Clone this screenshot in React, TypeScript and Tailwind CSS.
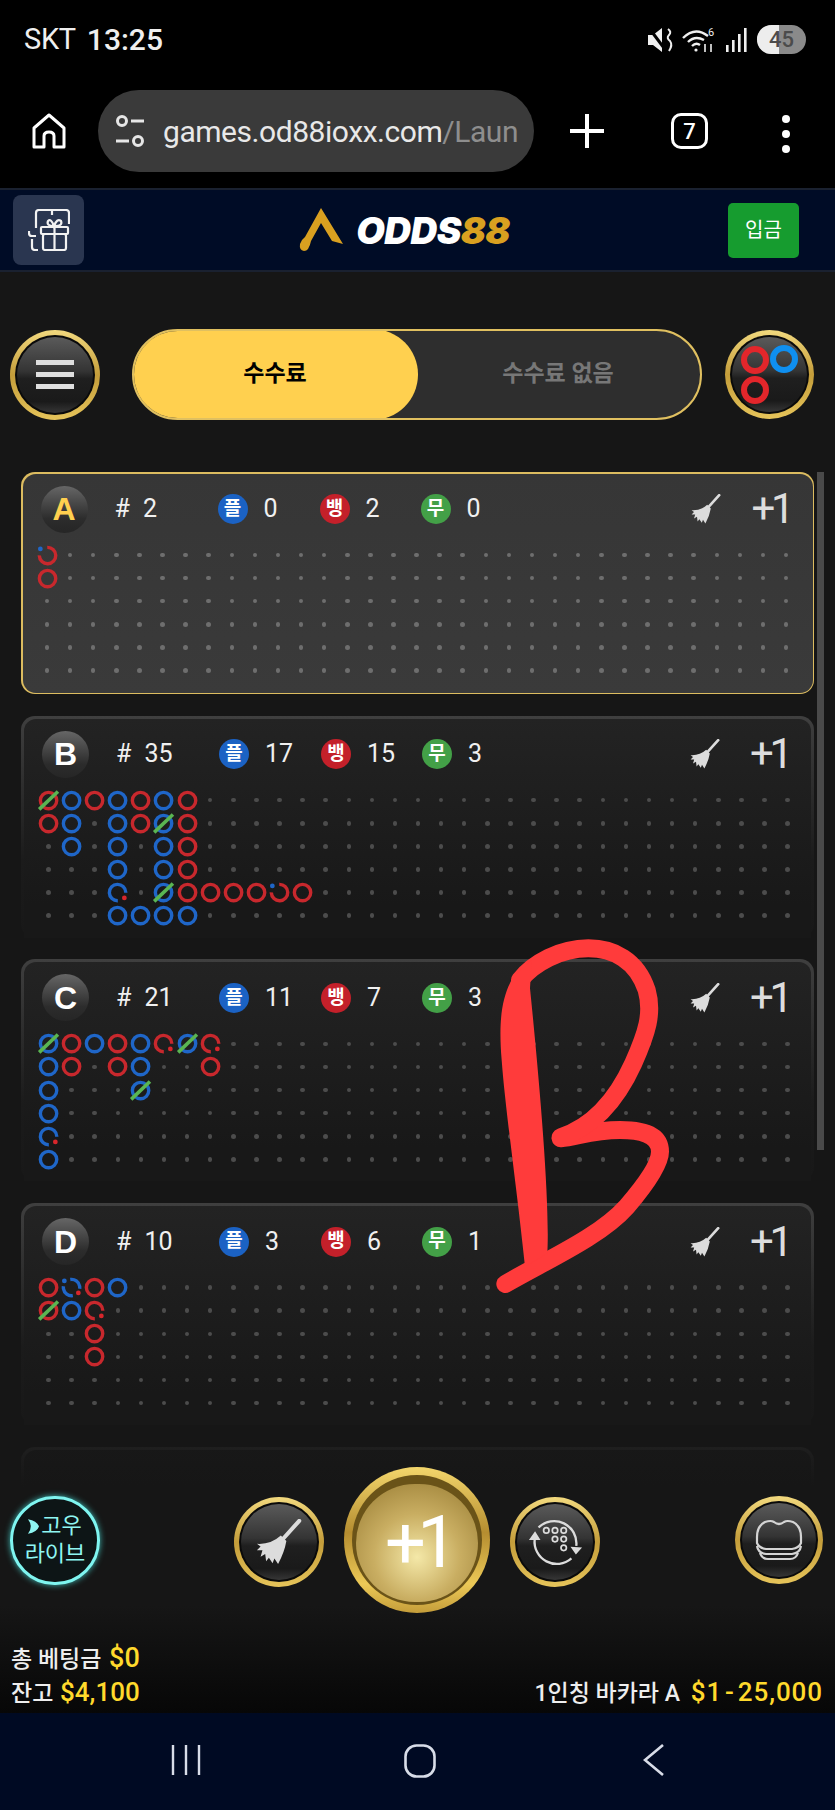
import React from "react";

const SANS = "font-[Roboto,'Noto_Sans_CJK_KR',sans-serif]";

// Each row lists columns separated by spaces: r/b is the ring colour, "." an empty spot.
// Suffixes: t = tie slash, p = blue pair dot, q = red pair dot.
const ROADS: Record<string, string[]> = {
  A: ["rp", "r"],
  B: [
    "rt b r b r b r",
    "r b . b r bt r",
    ". b . b . b r",
    ". . . b . b r",
    ". . . bq . bt r r r r rp r",
    ". . . b b b b",
  ],
  C: [
    "bt r b r b rq bt rq",
    "b r . r b . . r",
    "b . . . bt",
    "b",
    "bq",
    "b",
  ],
  D: ["r bpq r b", "rt b rq", ". . r", ". . r"],
};

const CARDS = [
  { id: "A", total: 2, p: 0, b: 2, t: 0 },
  { id: "B", total: 35, p: 17, b: 15, t: 3 },
  { id: "C", total: 21, p: 11, b: 7, t: 3 },
  { id: "D", total: 10, p: 3, b: 6, t: 1 },
];

function Ring({ token }: { token: string }) {
  const color = token[0] === "r" ? "#c8282d" : "#1f66c8";
  const tie = token.includes("t");
  const blue = token.includes("p");
  const red = token.includes("q");
  let dash: string | undefined;
  let rot = 0;
  if (blue && red) {
    dash = "30 20";
    rot = 81;
  } else if (blue) {
    dash = "76 24";
    rot = 268;
  } else if (red) {
    dash = "76 24";
    rot = 88;
  }
  return (
    <svg viewBox="-11.55 -11.55 23.1 23.1" className="block h-[23.1px] w-[23.1px] overflow-visible">
      <circle r="8.2" fill="none" stroke={color} strokeWidth="3.4" pathLength={100} strokeDasharray={dash} transform={`rotate(${rot})`} />
      {blue && <circle cx="-7.2" cy="-6.6" r="2.4" fill="#1f66c8" />}
      {red && <circle cx="6.8" cy="5.4" r="2.4" fill="#d8262b" />}
      {tie && <line x1="-9.4" y1="8.8" x2="9.4" y2="-9" stroke="#5ab552" strokeWidth="3.6" />}
    </svg>
  );
}

function Road({ id, active }: { id: string; active: boolean }) {
  const rows = ROADS[id];
  const cells: React.ReactNode[] = [];
  for (let r = 0; r < 6; r++) {
    const tokens = (rows[r] ?? "").split(" ");
    for (let c = 0; c < 33; c++) {
      const tok = tokens[c];
      cells.push(
        <div key={`${r}-${c}`} className="flex h-[23.1px] w-[23.1px] items-center justify-center">
          {tok && tok !== "." ? (
            <Ring token={tok} />
          ) : (
            <div className={active ? "h-[4.5px] w-[4.5px] rounded-full bg-[#6e6e6e]" : "h-[4.5px] w-[4.5px] rounded-full bg-[#4c4c4c]"} />
          )}
        </div>
      );
    }
  }
  return <div className="ml-[13px] mt-[1px] grid grid-cols-[repeat(33,23.1px)]">{cells}</div>;
}

function Broom({ className }: { className: string }) {
  return (
    <svg viewBox="0 0 50 50" className={className} fill="#dcdcdc">
      <path d="M47 2 L29 22" stroke="#dcdcdc" strokeWidth="4.4" strokeLinecap="round" />
      <path d="M27 18 L33 24 Q31 36 24 49 L20 43 L18 48 L14 42 L11 46 L10 38 L5 41 L7 34 L1 34 L5 30 L1 27 Q16 28 27 18 Z" />
    </svg>
  );
}

function Badge({ label, className }: { label: string; className: string }) {
  return (
    <span className={`flex h-[30px] w-[30px] items-center justify-center rounded-full text-[19px] font-bold text-white ${className}`}>
      {label}
    </span>
  );
}

function Card({ id, total, p, b, t }: (typeof CARDS)[number]) {
  const active = id === "A";
  const letter =
    "flex h-[47px] w-[47px] items-center justify-center rounded-full bg-[linear-gradient(to_bottom,#666666,#2c2c2c_70%,#262626)] text-[32px] font-bold font-['Liberation_Sans',sans-serif]";
  return (
    <div
      className={
        active
          ? "h-[222px] shrink-0 rounded-[14px] bg-[#dcbc60] p-[1.5px]"
          : "h-[222px] shrink-0 rounded-[14px] bg-[linear-gradient(to_bottom,#3f3f3f,#1b1b1b_65%,#181818)] px-[3px] pt-[3px]"
      }
    >
      <div
        className={
          active
            ? "h-full rounded-[13px] bg-[linear-gradient(to_bottom,#363636,#3a3a3a)]"
            : "h-full rounded-t-[12px] bg-[linear-gradient(to_bottom,#232323,#181818_85%)]"
        }
      >
        <div className={`flex h-[69px] items-center pl-[18px] pt-[2px] text-[25px] text-[#f0f0f0] ${SANS}`}>
          <div className={active ? `${letter} text-[#ffd04f]` : `${letter} text-white`}>{id}</div>
          <div className="ml-[27px] w-[103px]">
            #<span className="ml-[13px]">{total}</span>
          </div>
          <Badge label="플" className="bg-[#1b62c4]" />
          <div className="ml-[16px] w-[56px]">{p}</div>
          <Badge label="뱅" className="bg-[#c4202a]" />
          <div className="ml-[16px] w-[55px]">{b}</div>
          <Badge label="무" className="bg-[#43a047]" />
          <div className="ml-[16px]">{t}</div>
          <Broom className="ml-auto h-[30px] w-[30px]" />
          <div className="ml-[30px] mr-[22px] text-[42px] leading-none tracking-[-0.1em] text-[#dddddd]">+1</div>
        </div>
        <Road id={id} active={active} />
      </div>
    </div>
  );
}

function GoldButton({ className, children }: { className: string; children: React.ReactNode }) {
  return (
    <div className={`shrink-0 rounded-full bg-[linear-gradient(to_bottom,#f2d97e,#c49d3a_50%,#e6c45a)] p-[5px] ${className}`}>
      <div className="h-full w-full rounded-full bg-[#0a0a0a] p-[2px]">
        <div className="flex h-full w-full items-center justify-center rounded-full bg-[linear-gradient(to_bottom,#5a5a5a,#343434_45%,#1f1f1f_55%,#1a1a1a_85%,#363636)]">
          {children}
        </div>
      </div>
    </div>
  );
}

function StatusBar() {
  return (
    <div className="flex h-[78px] items-center pl-[24px] pr-[29px] pt-[1px] text-[#efefef]">
      <span className="text-[29px] leading-none tracking-[-0.01em]">SKT</span>
      <span className="ml-[11px] text-[30px] font-medium leading-none">13:25</span>
      <svg viewBox="0 0 28 26" className="ml-auto h-[26px] w-[28px]" fill="#efefef">
        <path d="M1 8 H6 L15 1 V25 L6 18 H1 Z" />
        <path d="M2 1 L20 25" stroke="#000000" strokeWidth="3" />
        <path d="M21 2 Q25 5 22 8 Q19 11 23 14 Q26 18 22 24" fill="none" stroke="#efefef" strokeWidth="2" />
      </svg>
      <svg viewBox="0 0 36 28" className="ml-[6px] h-[28px] w-[36px]" fill="none" stroke="#efefef" strokeWidth="2.4">
        <path d="M2 12 Q14 0 27 10" />
        <path d="M7 16 Q14 9 23 14" />
        <path d="M11 20 Q15 16 19 19" />
        <circle cx="15" cy="24" r="1.6" fill="#efefef" stroke="none" />
        <path d="M24 18 V26 M30 18 V26" strokeWidth="1.6" />
        <text x="27" y="10" fontSize="11" fill="#efefef" stroke="none" fontFamily="Roboto">6</text>
      </svg>
      <svg viewBox="0 0 24 26" className="ml-[8px] h-[26px] w-[24px]" fill="#efefef">
        <rect x="1" y="18" width="2.6" height="7" />
        <rect x="7" y="13" width="2.6" height="12" />
        <rect x="13" y="7" width="2.6" height="18" />
        <rect x="19" y="1" width="2.6" height="24" />
      </svg>
      <div className="relative ml-[8px] flex h-[29px] w-[49px] items-center justify-center overflow-hidden rounded-full bg-[#8a8a8a]">
        <div className="absolute inset-y-0 left-0 w-[22px] bg-[#ededed]" />
        <span className="relative text-[22px] font-medium text-[#4b4b4b]">45</span>
      </div>
    </div>
  );
}

function BrowserBar() {
  return (
    <div className="flex h-[110px] items-start pl-[32px] pt-[12px]">
      <svg viewBox="0 0 34 36" className="mt-[23px] h-[36px] w-[34px]" fill="none" stroke="#ffffff" strokeWidth="3">
        <path d="M2 34 V15 L17 2 L32 15 V34 H22 V23 Q22 19 17 19 Q12 19 12 23 V34 Z" strokeLinejoin="round" />
      </svg>
      <div className="ml-[32px] flex h-[82px] w-[436px] items-center overflow-hidden rounded-full bg-[#3a3a3a] pl-[17px]">
        <svg viewBox="0 0 30 34" className="h-[34px] w-[30px] shrink-0" fill="none" stroke="#e6e6e6" strokeWidth="3">
          <circle cx="7" cy="7" r="4.5" />
          <path d="M16 7 H29 M1 27 H14" />
          <circle cx="23" cy="27" r="4.5" />
        </svg>
        <span className="ml-[18px] whitespace-nowrap text-[30px] tracking-[-0.015em] text-[#e8e8e8]">
          games.od88ioxx.com<span className="text-[#8e8e8e]">/Laun</span>
        </span>
      </div>
      <svg viewBox="0 0 34 34" className="ml-[36px] mt-[24px] h-[34px] w-[34px]" stroke="#ffffff" strokeWidth="4">
        <path d="M17 0 V34 M0 17 H34" />
      </svg>
      <div className="ml-[67px] mt-[23px] flex h-[36px] w-[37px] items-center justify-center rounded-[10px] border-[3px] border-white text-[22px] font-medium text-white">
        7
      </div>
      <div className="ml-[74px] mt-[25px] flex flex-col gap-[7px]">
        <div className="h-[8px] w-[8px] rounded-full bg-white" />
        <div className="h-[8px] w-[8px] rounded-full bg-white" />
        <div className="h-[8px] w-[8px] rounded-full bg-white" />
      </div>
    </div>
  );
}

function SiteHeader() {
  return (
    <div className="relative flex h-[84px] shrink-0 items-center justify-between border-y-[2px] border-[#1a2130] bg-[#000c26] pl-[13px] pr-[36px]">
      <div className="flex h-[70px] w-[71px] items-center justify-center rounded-[8px] bg-[#2a3650]">
        <svg viewBox="0 0 42 42" className="h-[42px] w-[42px]" fill="none" stroke="#f2f2f2" strokeWidth="2.2">
          <path d="M8 19 V4 Q8 1 11 1 H38 Q41 1 41 4 V15" />
          <path d="M24 1 V6" />
          <path d="M8 27 H4 Q1 27 1 24 V22 M4 30 V38 Q4 41 7 41 H10" />
          <rect x="13" y="18" width="27" height="7" rx="1" />
          <rect x="15" y="25" width="23" height="16" rx="2" />
          <path d="M26.5 18 V41" />
          <path d="M26 17 Q18 17 20 12 Q23 9 26 17 Q29 9 33 12 Q35 17 27 17" />
        </svg>
      </div>
      <div className="-ml-[3px] flex items-center">
        <svg viewBox="0 0 44 44" className="h-[44px] w-[44px]">
          <path d="M22 0 L44 36 L33 33 L22 15 L12 33 Q10 43 5 43 Q0 42 1 36 Q3 31 6 29 Z" fill="#d9a020" />
        </svg>
        <span className="ml-[13px] font-['Inter',sans-serif] text-[37px] font-black italic leading-none tracking-[-0.015em] text-white">
          ODDS<span className="text-[#d9a020]">88</span>
        </span>
      </div>
      <div className="flex h-[55px] w-[71px] items-center justify-center rounded-[5px] bg-[#169c2f] text-[20px] text-white">
        입금
      </div>
    </div>
  );
}

function ToolBar() {
  return (
    <div className="mt-[57px] flex h-[91px] items-center pl-[10px]">
      <GoldButton className="h-[90px] w-[90px]">
        <div className="flex flex-col gap-[7px]">
          <div className="h-[5px] w-[38px] bg-[#dedede]" />
          <div className="h-[5px] w-[38px] bg-[#dedede]" />
          <div className="h-[5px] w-[38px] bg-[#dedede]" />
        </div>
      </GoldButton>
      <div className="ml-[32px] flex h-[91px] w-[570px] overflow-hidden rounded-full border-[2px] border-[#e0c060] bg-[#2e2e2e] text-[23px] font-bold">
        <div className="-m-[2px] flex h-[91px] w-[286px] items-center justify-center rounded-full bg-[#ffd04f] text-black">수수료</div>
        <div className="flex flex-1 items-center justify-center text-[#777777]">수수료 없음</div>
      </div>
      <GoldButton className="ml-[23px] h-[89px] w-[89px]">
        <svg viewBox="0 0 60 60" className="h-[60px] w-[60px]" fill="none" strokeWidth="6">
          <circle cx="15" cy="15" r="11" stroke="#e3262b" />
          <circle cx="44" cy="14" r="11" stroke="#0f8ff0" />
          <circle cx="15" cy="45" r="11" stroke="#e3262b" />
        </svg>
      </GoldButton>
    </div>
  );
}

function ReloadIcon() {
  return (
    <svg viewBox="0 0 60 60" className="h-[58px] w-[58px]" fill="none" stroke="#dcdcdc" strokeWidth="2.4">
      <path d="M13 15 A23 23 0 0 1 52 34" />
      <path d="M47 47 A23 23 0 0 1 9 27" />
      <path d="M9.4 19 L3 28 L15 28 Z M51.6 43 L46 35 L58 35.6 Z" fill="#dcdcdc" stroke="none" />
      <g strokeWidth="1.8">
        <circle cx="21" cy="18" r="2.8" />
        <circle cx="30" cy="18" r="2.8" />
        <circle cx="39" cy="18" r="2.8" />
        <circle cx="30" cy="27" r="2.8" />
        <circle cx="39" cy="27" r="2.8" />
        <circle cx="39" cy="36" r="2.8" />
      </g>
    </svg>
  );
}

function TableIcon() {
  return (
    <svg viewBox="0 0 50 42" className="h-[42px] w-[50px]" fill="none" stroke="#d4d4d4" strokeWidth="2.2">
      <path d="M11 3 Q17 1 20 3 Q25 7 30 3 Q33 1 39 3 Q47 7 47 18 V24 Q45 29 38 30 H12 Q5 29 3 24 V18 Q3 7 11 3 Z" />
      <path d="M3 27 Q4 34 12 35 H38 Q46 34 47 27" />
      <path d="M6 34 Q8 40 14 40 H36 Q42 40 44 34" />
    </svg>
  );
}

function Footer() {
  return (
    <div className="absolute inset-x-0 top-[1158px] flex h-[283px] flex-col bg-[linear-gradient(to_bottom,rgba(22,22,22,0.7),#161616_20%,#161616_62%,#070707)]">
      <div className="flex items-center pl-[10px] pt-[37px]">
        <div className="flex h-[89px] w-[90px] shrink-0 flex-col items-center justify-center rounded-full border-[3px] border-[#7ff5f0] bg-[#0d1516] text-[22px] leading-[28px] text-[#8ff6f2] shadow-[0_0_6px_#3fb9b5]">
          <div className="flex items-center">
            <svg viewBox="0 0 12 16" className="mr-[2px] h-[15px] w-[11px]" fill="#8ff6f2">
              <path d="M0 0 Q10 2 12 8 Q10 14 0 16 Q6 8 0 0 Z" />
            </svg>
            고우
          </div>
          <div>라이브</div>
        </div>
        <GoldButton className="ml-[134px] mt-[4px] h-[90px] w-[90px]">
          <Broom className="h-[46px] w-[46px]" />
        </GoldButton>
        <div className="ml-[20px] h-[146px] w-[146px] shrink-0 rounded-full bg-[linear-gradient(to_bottom,#f3d66c,#b58d30_45%,#ecc957_80%,#c49d3a)] p-[8px]">
          <div className="h-full w-full rounded-full bg-[#6a5318] px-[4px] pb-[3px] pt-[9px]">
            <div className={`flex h-full w-full items-center justify-center rounded-full bg-[radial-gradient(circle_at_50%_62%,#f4e8a8,#c9ae62_45%,#a88c42_80%,#c2b183)] text-[72px] leading-none tracking-[-0.12em] text-white ${SANS}`}>
              +1
            </div>
          </div>
        </div>
        <GoldButton className="ml-[20px] mt-[4px] h-[90px] w-[90px]">
          <ReloadIcon />
        </GoldButton>
        <GoldButton className="ml-[135px] h-[88px] w-[88px]">
          <TableIcon />
        </GoldButton>
      </div>
      <div className={`mt-auto flex items-end justify-between pb-[3px] pl-[11px] pr-[12px] text-[23px] font-medium leading-[33px] text-[#eeeeee] ${SANS}`}>
        <div>
          <div>
            총 베팅금 <span className="ml-[2px] text-[27px] text-[#ffd92c]">$0</span>
          </div>
          <div>
            잔고 <span className="ml-[1px] text-[26px] text-[#ffd92c]">$4,100</span>
          </div>
        </div>
        <div>
          1인칭 바카라 A <span className="ml-[5px] text-[26px] tracking-[0.035em] text-[#ffd92c]">$1<span className="mx-[3px]">-</span>25,000</span>
        </div>
      </div>
    </div>
  );
}

function NavBar() {
  return (
    <div className="relative flex h-[97px] shrink-0 items-start bg-[#000a23] pl-[69px] pt-[31px]">
      <div className="flex w-[234px] justify-center">
        <svg viewBox="0 0 30 32" className="h-[32px] w-[30px]" stroke="#d8dde8" strokeWidth="2.4">
          <path d="M2 1 V31 M15 1 V31 M28 1 V31" />
        </svg>
      </div>
      <div className="flex w-[234px] justify-center">
        <svg viewBox="0 0 32 34" className="h-[34px] w-[32px]" fill="none" stroke="#d8dde8" strokeWidth="2.6">
          <rect x="1.5" y="1.5" width="29" height="31" rx="11" />
        </svg>
      </div>
      <div className="flex w-[234px] justify-center">
        <svg viewBox="0 0 22 32" className="h-[32px] w-[22px]" fill="none" stroke="#d8dde8" strokeWidth="2.6">
          <path d="M20 1 L2 16 L20 31" />
        </svg>
      </div>
    </div>
  );
}

export default function App() {
  return (
    <div className={`relative flex h-[1810px] w-[835px] flex-col overflow-hidden bg-black ${SANS}`}>
      <StatusBar />
      <BrowserBar />
      <SiteHeader />
      <main className="relative min-h-0 flex-1 overflow-hidden bg-[#161616]">
        <ToolBar />
        <div className="flex items-start pl-[21px] pt-[52px]">
          <div className="flex w-[793px] flex-col gap-[21.7px]">
            {CARDS.map((c) => (
              <Card key={c.id} {...c} />
            ))}
            <div className="h-[222px] shrink-0 rounded-[14px] bg-[linear-gradient(to_bottom,#3f3f3f,#181818_65%)] px-[3px] pt-[3px]">
              <div className="h-full rounded-t-[12px] bg-[#1f1f1f]" />
            </div>
          </div>
          <div className="ml-[3px] h-[678px] w-[7px] shrink-0 bg-[#4a4a4a]" />
        </div>
        <Footer />
      </main>
      <NavBar />
      {/* hand-drawn letter scribbled across the lower cards */}
      <svg viewBox="0 0 1125 1200" className="absolute left-[460px] top-[920px] h-[400px] w-[375px]" fill="none" stroke="#ff3b3b" strokeLinecap="round" strokeLinejoin="round">
        <path d="M136 1092 C260 1020 420 950 500 860 C560 790 600 730 600 695 C600 640 540 630 480 630 C400 630 350 650 302 655" strokeWidth="54" />
        <path d="M302 652 C400 620 470 540 520 430 C560 340 580 280 560 210 C530 120 460 85 385 85 C300 85 220 130 180 180" strokeWidth="54" />
        <path d="M215 120 L160 170 C125 230 115 300 125 420 C135 560 170 800 195 1040 L262 1000 C270 850 240 500 210 205 Z" fill="#ff3b3b" stroke="none" />
      </svg>
    </div>
  );
}
